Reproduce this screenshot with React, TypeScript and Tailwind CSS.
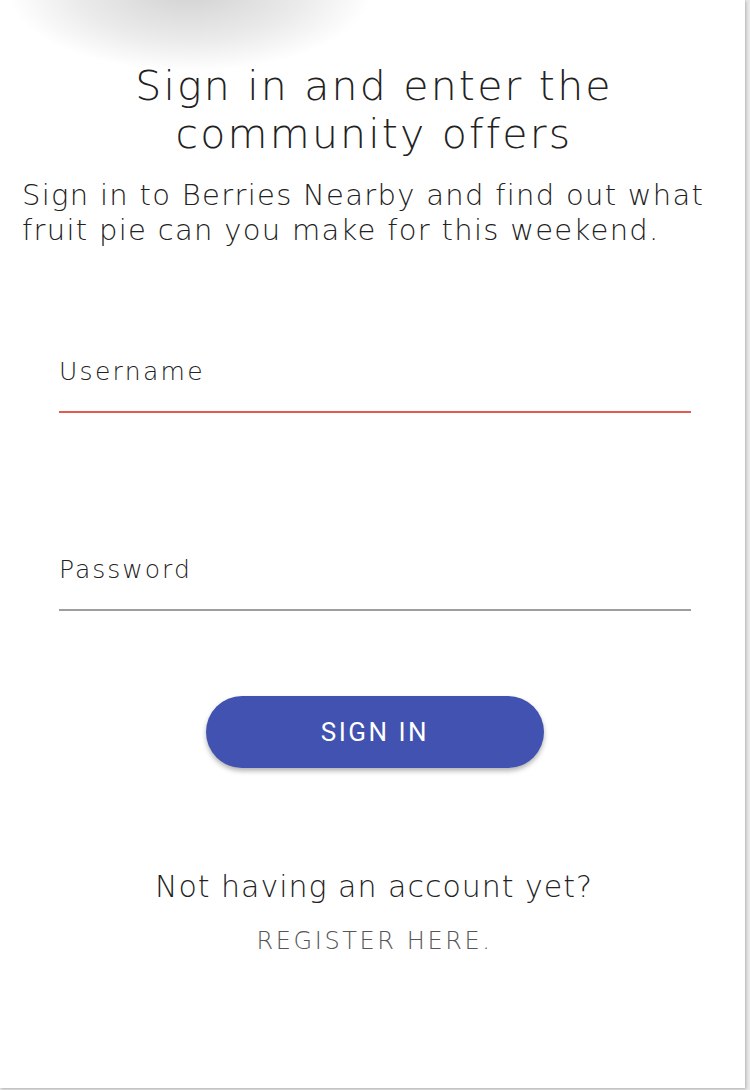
import React from "react";

export default function App() {
  const font = { fontFamily: '"DejaVu Sans", "Open Sans", sans-serif' };
  return (
    <div className="relative w-[750px] h-[1090px] bg-[#e9e9e9] overflow-hidden" style={font}>
      <div className="relative w-[745px] h-[1088px] bg-white overflow-hidden shadow-[1px_1px_3px_rgba(0,0,0,0.25)]">
        <div className="absolute left-[10px] top-[-90px] w-[360px] h-[160px] rounded-full bg-[radial-gradient(ellipse_at_center,rgba(0,0,0,0.18)_0%,rgba(0,0,0,0.08)_45%,rgba(0,0,0,0)_72%)]" />
        <div className="relative flex flex-col">
          <h1 className="mt-[62px] pl-[3px] text-center text-[41px] leading-[48px] font-extralight text-[#222] tracking-[2.2px]">
            Sign in and enter the
            <br />
            community offers
          </h1>
          <p className="mt-[20px] pl-[22px] text-[29px] leading-[35px] font-extralight text-[#222] tracking-[1.3px] whitespace-nowrap">
            Sign in to Berries Nearby and find out what
            <br />
            fruit pie can you make for this weekend.
          </p>
          <div className="mt-[109px] pl-[59px] pr-[54px] flex flex-col">
            <div className="h-[56px] flex items-start border-b-2 border-[#e35b4e]">
              <span className="text-[25px] leading-[30px] font-extralight text-[#222] tracking-[2.3px]">Username</span>
            </div>
            <div className="mt-[142px] h-[56px] flex items-start border-b-2 border-[#9e9e9e]">
              <span className="text-[25px] leading-[30px] font-extralight text-[#222] tracking-[2px]">Password</span>
            </div>
          </div>
          <div className="mt-[85px] pl-[5px] flex justify-center">
            <button
              className="w-[338px] h-[72px] rounded-full bg-[#4152b0] text-white text-[26px] tracking-[2.5px] shadow-[0_3px_5px_rgba(0,0,0,0.3)]"
              style={{ fontFamily: 'Roboto, "Noto Sans", sans-serif' }}
            >
              SIGN IN
            </button>
          </div>
          <p className="mt-[101px] pl-[3px] text-center text-[30px] leading-[36px] font-extralight text-[#222] tracking-[1px]">
            Not having an account yet?
          </p>
          <p className="mt-[21px] pl-[4px] text-center text-[24px] leading-[30px] font-extralight text-[#555] tracking-[2.6px]">
            REGISTER HERE.
          </p>
        </div>
      </div>
    </div>
  );
}
